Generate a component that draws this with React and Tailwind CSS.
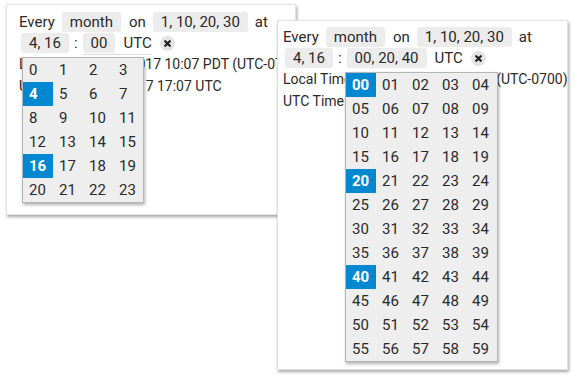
const HOURS = Array.from({ length: 24 }, (_, i) => String(i));
const MINUTES = Array.from({ length: 60 }, (_, i) => String(i).padStart(2, '0'));

function Chip({ children, className = '' }) {
  return (
    <span className={`inline-flex h-5 items-center rounded-[3px] bg-[#ececec] px-2 leading-5 ${className}`}>
      {children}
    </span>
  );
}

function ClearIcon() {
  return (
    <svg width="15" height="15" viewBox="0 0 15 15" aria-hidden="true">
      <circle cx="7.5" cy="7.5" r="7.5" fill="#e3e3e3" />
      <g stroke="#1a1a1a" strokeWidth="2.2" strokeLinecap="round">
        <path d="M5.2 5.2l4.6 4.6M9.8 5.2l-4.6 4.6" />
      </g>
    </svg>
  );
}

function Picker({ items, selected, cols }) {
  return (
    <div
      className={`grid bg-[#eeeeee] border border-[#b5b5b5] shadow-[1px_2px_3px_rgba(0,0,0,0.3)] ${
        cols === 4 ? 'grid-cols-[repeat(4,30px)]' : 'grid-cols-[repeat(5,30px)] pr-px'
      }`}
    >
      {items.map((v) => {
        const on = selected.includes(v);
        return (
          <div
            key={v}
            className={`h-6 pl-[6px] text-[15px] leading-6 ${on ? 'bg-[#0288d1] font-bold text-white' : 'text-[#2a2a2a]'}`}
          >
            {v}
          </div>
        );
      })}
    </div>
  );
}

function Schedule({ minutes, underline }) {
  return (
    <>
      <div className="flex h-5 items-center gap-[7px]">
        <span>Every</span>
        <Chip>month</Chip>
        <span className="ml-px">on</span>
        <Chip>1, 10, 20, 30</Chip>
        <span>at</span>
      </div>
      <div className="mt-px flex h-5 items-center">
        <Chip className="ml-[2px]">4, 16</Chip>
        <span className="px-[5px]">:</span>
        <span className={`inline-flex items-center ${underline ? 'shadow-[0_1px_0_#dcdcdc]' : ''}`}>
          <Chip>{minutes}</Chip>
          <span className="ml-2">UTC</span>
        </span>
        <span className="ml-2 flex">
          <ClearIcon />
        </span>
      </div>
      <div className="whitespace-nowrap text-[14px] leading-[22px]">
        <div>Local Time: 6/12/2017 10:07 PDT (UTC-0700)</div>
        <div>UTC Time: 6/12/2017 17:07 UTC</div>
      </div>
    </>
  );
}

export default function App() {
  return (
    <div className="relative h-[380px] w-[580px] overflow-hidden bg-white font-['Roboto',sans-serif] text-[15px] text-[#2a2a2a]">
      <div className="absolute left-[6px] top-[4px] h-[211px] w-[290px] overflow-hidden border border-[#e2e2e2] bg-white pl-3 pt-[7px] shadow-[1px_2px_3px_rgba(0,0,0,0.35)]">
        <Schedule minutes="00" underline />
        <div className="absolute left-[15px] top-[52px]">
          <Picker items={HOURS} selected={['4', '16']} cols={4} />
        </div>
      </div>

      <div className="absolute left-[277px] top-[20px] h-[350px] w-[291px] overflow-hidden border border-[#e2e2e2] bg-white pl-[5px] pt-[6px] shadow-[1px_2px_3px_rgba(0,0,0,0.35)]">
        <Schedule minutes="00, 20, 40" />
        <div className="absolute left-[67px] top-[51px]">
          <Picker items={MINUTES} selected={['00', '20', '40']} cols={5} />
        </div>
      </div>
    </div>
  );
}
